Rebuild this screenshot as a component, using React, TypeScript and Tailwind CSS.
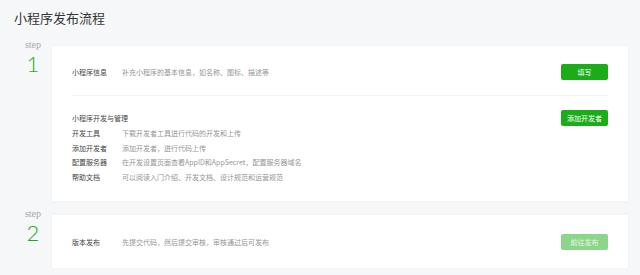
import React from "react";

const font = { fontFamily: '"Noto Sans CJK SC", "Noto Sans", sans-serif' };

const devRows = [
  { label: "开发工具", desc: "下载开发者工具进行代码的开发和上传" },
  { label: "添加开发者", desc: "添加开发者，进行代码上传" },
  { label: "配置服务器", desc: "在开发设置页面查看AppID和AppSecret，配置服务器域名" },
  { label: "帮助文档", desc: "可以阅读入门介绍、开发文档、设计规范和运营规范" },
];

const Step = ({ n }: { n: number }) => (
  <div className="w-[38px] shrink-0 flex flex-col items-center -mt-[7px]">
    <span className="text-[10px] leading-[11px] text-[#a8a8a8] font-['Liberation_Serif',serif]">step</span>
    <span className="mt-[1px] text-[22px] leading-[26px] font-light text-[#1aad19] font-['Lato',sans-serif]">{n}</span>
  </div>
);

const Button = ({ children, disabled }: { children: React.ReactNode; disabled?: boolean }) => (
  <button
    className={
      disabled
        ? "w-[47px] h-[16px] rounded-[2px] bg-[#8cd68b] text-[#e6f6e6] text-[7px] leading-[16px]"
        : "w-[47px] h-[16px] rounded-[2px] bg-[#1aad19] text-white text-[7px] leading-[16px]"
    }
  >
    {children}
  </button>
);

const App = () => {
  return (
    <div className="w-[640px] h-[275px] bg-[#f6f7f9] px-[14px] overflow-hidden" style={font}>
      <h1 className="pt-[11px] text-[13px] leading-[14px] text-[#353535]">小程序发布流程</h1>

      <div className="flex mt-[21px] mr-[-2px]">
        <Step n={1} />
        <div className="flex-1 bg-white shadow-[0_0_1px_rgba(0,0,0,0.1)] px-[20px]">
          <div className="flex items-center pt-[18px] pb-[15px] border-b border-[#f2f2f2]">
            <span className="w-[50px] text-[7px] text-[#444]">小程序信息</span>
            <span className="flex-1 text-[7px] text-[#959595]">补充小程序的基本信息，如名称、图标、描述等</span>
            <Button>填写</Button>
          </div>
          <div className="pt-[14px] pb-[17px]">
            <div className="flex items-center justify-between">
              <span className="text-[7px] text-[#444]">小程序开发与管理</span>
              <Button>添加开发者</Button>
            </div>
            {devRows.map((r) => (
              <div key={r.label} className="flex text-[7px] leading-[14.5px]">
                <span className="w-[50px] text-[#444]">{r.label}</span>
                <span className="text-[#959595]">{r.desc}</span>
              </div>
            ))}
          </div>
        </div>
      </div>

      <div className="flex mt-[14px] mr-[-2px]">
        <Step n={2} />
        <div className="flex-1 bg-white shadow-[0_0_1px_rgba(0,0,0,0.1)] px-[20px]">
          <div className="flex items-center pt-[19px] pb-[18px]">
            <span className="w-[50px] text-[7px] text-[#444]">版本发布</span>
            <span className="flex-1 text-[7px] text-[#959595]">先提交代码，然后提交审核，审核通过后可发布</span>
            <Button disabled>前往发布</Button>
          </div>
        </div>
      </div>
    </div>
  );
};

export default App;
